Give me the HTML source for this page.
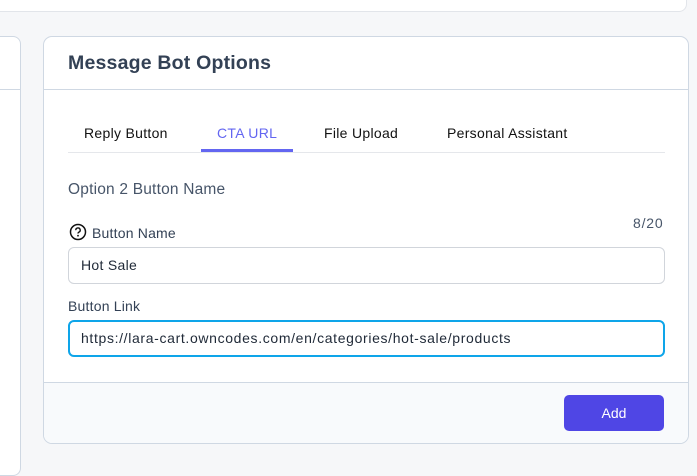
<!DOCTYPE html>
<html><head><style>
*{box-sizing:border-box;margin:0;padding:0}
body{width:697px;height:465px;background:#f6f7f9;font-family:"Liberation Sans",sans-serif;position:relative;overflow:hidden}
.top{position:absolute;left:-10px;top:-20px;width:697px;height:32px;background:#fff;border:1px solid #e2e5ea;border-radius:8px}
.left{position:absolute;left:-40px;top:36px;width:61px;height:440px;background:#fff;border:1px solid #cfd8e3;border-radius:8px}
.left .d{position:absolute;left:0;right:0;top:52px;border-top:1px solid #cfd8e3}
.card{position:absolute;left:43px;top:36px;width:646px;height:408px;background:#fff;border:1px solid #cfd8e3;border-radius:9px;overflow:hidden}
.h{position:absolute;left:24px;top:15px;font-size:19.5px;font-weight:bold;color:#334155;letter-spacing:.2px}
.hd{position:absolute;left:0;right:0;top:52px;border-top:1px solid #cfd8e3}
.tabs{position:absolute;left:24px;top:115px;width:597px;border-top:1px solid #e5e7eb}
.tab{position:absolute;top:88px;font-size:14px;color:#111;letter-spacing:.3px}
.ul{position:absolute;left:157px;top:112px;width:92px;height:3px;background:#6366f1}
.t{position:absolute;font-size:14px;color:#334155;letter-spacing:.2px}
.in{position:absolute;left:24px;width:597px;height:37px;border:1px solid #d1d5db;border-radius:6px;padding-left:12px;font-size:14px;color:#1f2937;line-height:35px}
.foot{position:absolute;left:0;right:0;top:345px;bottom:0;background:#f8fafc;border-top:1px solid #cfd8e3}
.btn{position:absolute;left:520px;top:12px;width:100px;height:36px;background:#4f46e5;border-radius:5px;color:#fff;font-size:14px;text-align:center;line-height:36px}
</style></head><body>
<div class="top"></div>
<div class="left"><div class="d"></div></div>
<div class="card">
<div class="h">Message Bot Options</div>
<div class="hd"></div>
<div class="tab" style="left:40px">Reply Button</div>
<div class="tab" style="left:173px;color:#6366f1">CTA URL</div>
<div class="tab" style="left:280px">File Upload</div>
<div class="tab" style="left:403px">Personal Assistant</div>
<div class="tabs"></div>
<div class="ul"></div>
<div class="t" style="left:24px;top:144px;font-size:15.5px;color:#475569">Option 2 Button Name</div>
<svg style="position:absolute;left:25px;top:186px" width="18" height="18" viewBox="0 0 18 18"><circle cx="9" cy="9" r="7.5" fill="none" stroke="#111" stroke-width="1.5"/><path d="M6.8 7.2a2.2 2.2 0 1 1 3 2c-.6.3-.8.7-.8 1.3" fill="none" stroke="#111" stroke-width="1.4"/><circle cx="9" cy="12.7" r=".9" fill="#111"/></svg>
<div class="t" style="left:48px;top:188px">Button Name</div>
<div class="t" style="left:589px;top:178px;color:#475569;letter-spacing:.8px">8/20</div>
<div class="in" style="top:210px;letter-spacing:.3px">Hot Sale</div>
<div class="t" style="left:24px;top:261px">Button Link</div>
<div class="in" style="top:283px;border:2px solid #0ea5e9;padding-left:11px;line-height:33px;letter-spacing:.65px">https://lara-cart.owncodes.com/en/categories/hot-sale/products</div>
<div class="foot"><div class="btn">Add</div></div>
</div>
</body></html>
